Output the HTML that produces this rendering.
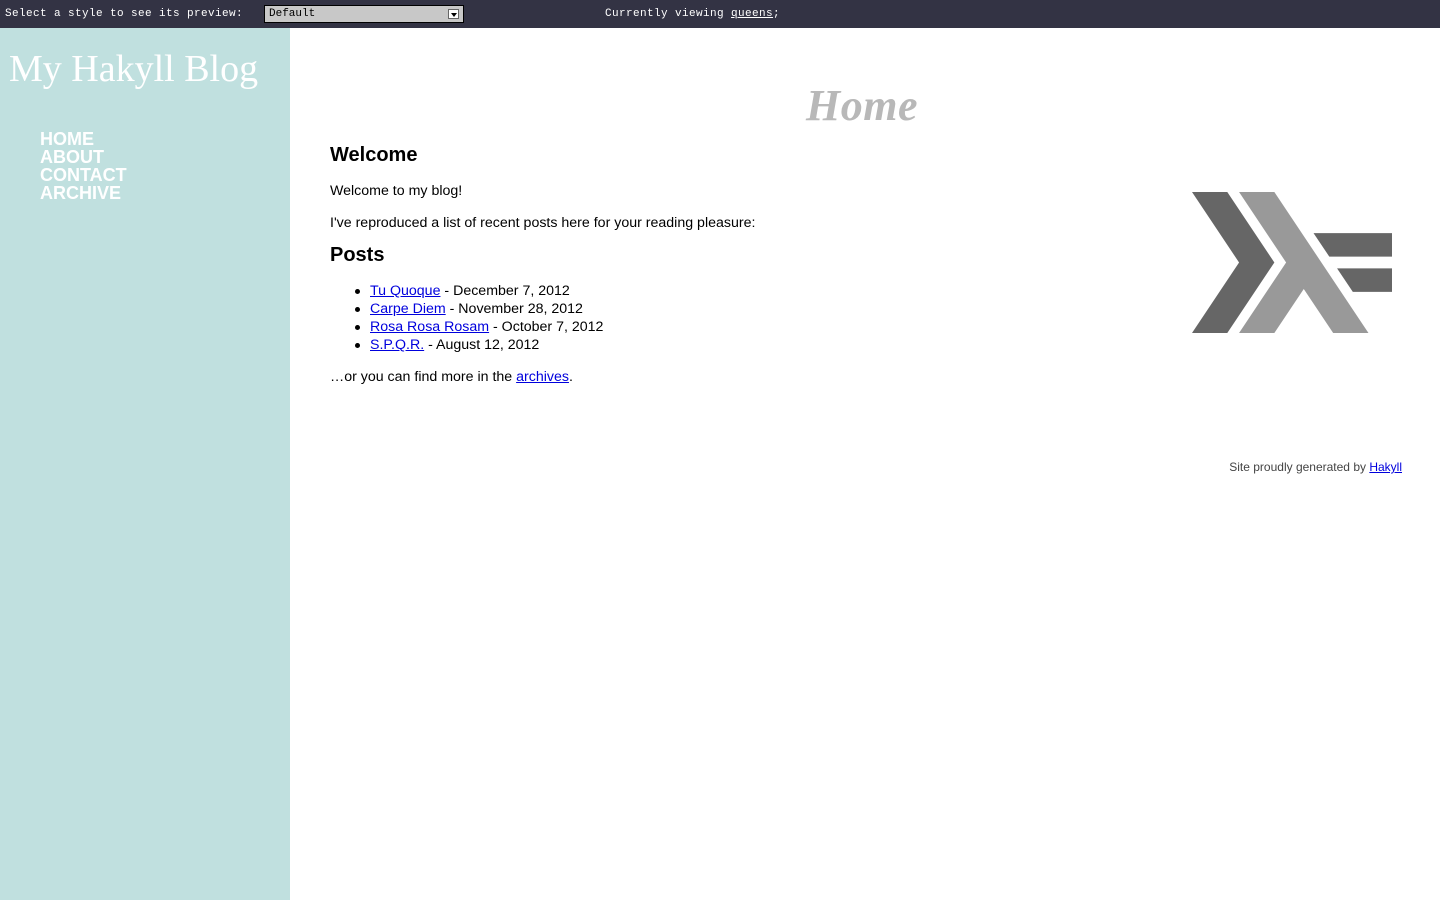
<!DOCTYPE html>
<html><head><meta charset="utf-8"><style>
*{margin:0;padding:0;box-sizing:border-box}
body{width:1440px;height:900px;overflow:hidden;background:#fff;font-family:"Liberation Sans",sans-serif;color:#000;position:relative}
#top{position:absolute;left:0;top:0;width:1440px;height:28px;background:#333344;color:#fff;font-family:"Liberation Mono",monospace;font-size:11px}
#top .l{position:absolute;left:5px;top:8px;letter-spacing:0.4px}
#top .sel{position:absolute;left:264px;top:5px;width:200px;height:18px;background:#c8c8c8;border:1px solid #000;color:#000;padding:2px 4px;font-size:11px}
#top .arr{position:absolute;right:4px;top:3px;width:11px;height:10px;background:#fff;border:1px solid #666}
#top .arr:after{content:"";position:absolute;left:2px;top:3px;border-left:3px solid transparent;border-right:3px solid transparent;border-top:4px solid #000}
#top .r{position:absolute;left:605px;top:8px;letter-spacing:0.4px}
#top .r u{text-decoration:underline}
#side{position:absolute;left:0;top:28px;width:290px;height:872px;background:#c0e0df}
#side h1{position:absolute;left:9px;top:19px;font-family:"Liberation Serif",serif;font-weight:normal;font-size:38px;color:#fff;white-space:nowrap}
#side .nav{position:absolute;left:40px;top:102px;font-weight:bold;font-size:18px;line-height:18px;color:#fff}
#title{position:absolute;left:806px;top:80px;font-family:"Liberation Serif",serif;font-style:italic;font-weight:bold;font-size:44px;color:#b8b8b8;letter-spacing:0.5px}
.c{position:absolute;left:330px;font-size:14.2px;white-space:nowrap}
h2.c{font-size:20px;font-weight:bold}
a{color:#0000dd;text-decoration:underline}
ul{position:absolute;left:370px;top:282px;font-size:14.2px;line-height:18px;list-style:none;white-space:nowrap}
ul li:before{content:"";position:absolute;left:-15px;margin-top:7px;width:5px;height:5px;border-radius:50%;background:#000}
#foot{position:absolute;right:38px;top:460px;font-size:12px;color:#444}
</style></head><body>
<div id="top"><span class="l">Select a style to see its preview:</span>
<div class="sel">Default<span class="arr"></span></div>
<span class="r">Currently viewing <u>queens</u>;</span></div>
<div id="side"><h1>My Hakyll Blog</h1>
<div class="nav">HOME<br>ABOUT<br>CONTACT<br>ARCHIVE</div></div>
<div id="title">Home</div>
<h2 class="c" style="top:144px">Welcome</h2>
<div class="c" style="top:183px">Welcome to my blog!</div>
<div class="c" style="top:215px">I've reproduced a list of recent posts here for your reading pleasure:</div>
<h2 class="c" style="top:244px">Posts</h2>
<ul>
<li><a>Tu Quoque</a> - December 7, 2012</li>
<li><a>Carpe Diem</a> - November 28, 2012</li>
<li><a>Rosa Rosa Rosam</a> - October 7, 2012</li>
<li><a>S.P.Q.R.</a> - August 12, 2012</li>
</ul>
<div class="c" style="top:369px">…or you can find more in the <a>archives</a>.</div>
<svg style="position:absolute;left:1192px;top:192px" width="200" height="141" viewBox="0 0 17 12" preserveAspectRatio="none">
<path d="M0 12L4 6L0 0H3L7 6L3 12Z" fill="#666"/>
<path d="M4 12L8 6L4 0H7L15 12H12L9.5 8.25L7 12Z" fill="#999"/>
<path d="M13.67 8.5L12.33 6.5H17V8.5Z" fill="#666"/>
<path d="M11.67 5.5L10.33 3.5H17V5.5Z" fill="#666"/>
</svg>
<div id="foot">Site proudly generated by <a>Hakyll</a></div>
</body></html>
